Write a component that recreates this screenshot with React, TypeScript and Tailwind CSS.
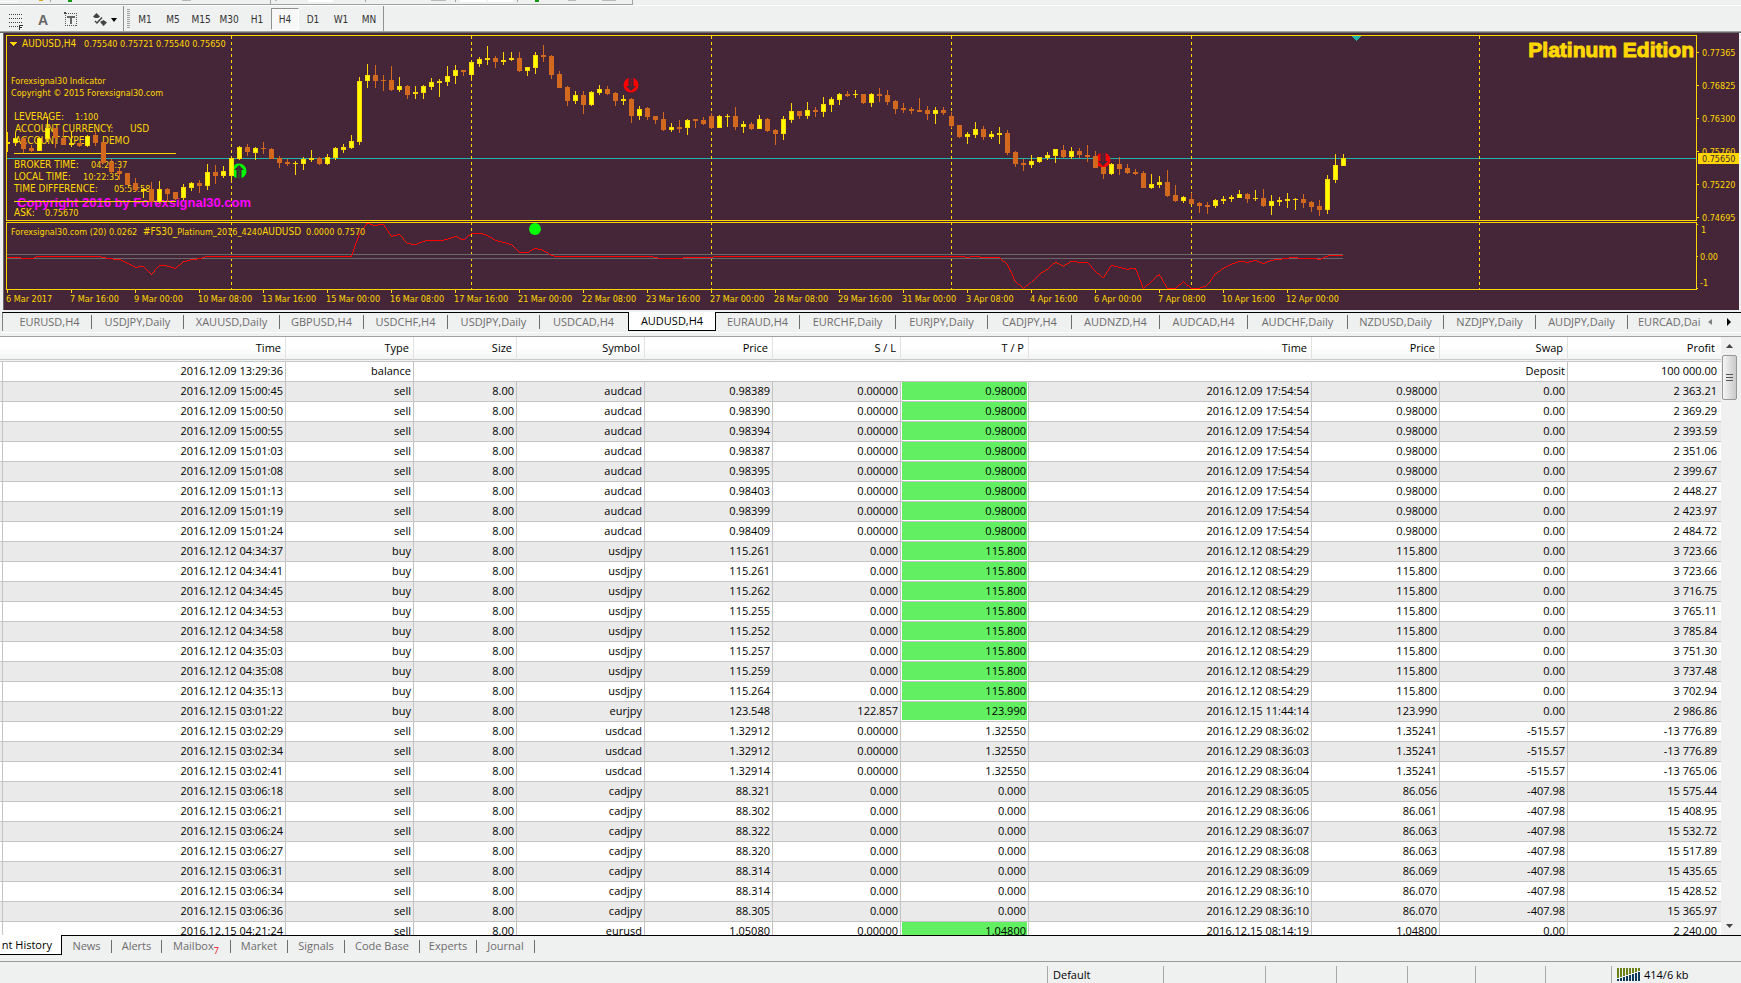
import React from "react";

type Candle = [number, number, number, number, 0 | 1];

// High, body top, body bottom, low (in thirds of a pixel), 1 = rising.
const CANDLES: Candle[] = [
  [396,426,432,456,1],[396,414,429,438,1],[411,414,447,459,0],[435,444,453,456,0],[411,414,453,453,1],[351,384,417,426,1],
  [384,384,414,444,0],[390,414,435,435,0],[396,429,435,441,1],[429,429,438,441,0],[405,408,438,441,1],[393,405,429,438,0],
  [426,426,489,489,0],[477,486,516,522,0],[504,513,522,540,0],[519,519,555,555,0],[534,549,570,573,0],[564,567,573,594,1],
  [546,567,606,606,0],[543,567,606,609,1],[564,567,582,606,0],[576,576,597,600,0],[552,561,594,600,1],[546,549,564,573,1],
  [540,549,558,579,0],[492,516,558,570,1],[495,516,528,552,0],[498,513,528,534,1],[474,474,528,543,1],[438,441,477,480,1],
  [432,441,456,468,0],[441,444,459,480,1],[426,444,447,462,0],[444,447,477,477,0],[468,474,489,504,0],[477,486,492,498,0],
  [483,489,492,525,1],[471,477,492,510,1],[450,474,480,486,1],[471,474,492,495,0],[462,471,492,495,1],[441,444,474,480,1],
  [432,441,450,459,1],[405,423,444,447,1],[231,243,426,435,1],[192,225,243,264,1],[195,225,243,264,0],[225,240,243,273,0],
  [198,240,270,273,0],[231,258,270,276,1],[255,258,285,297,0],[258,276,282,297,1],[255,258,279,297,1],[234,246,261,270,1],
  [237,243,249,291,1],[198,228,246,258,1],[195,210,228,252,1],[210,210,216,228,0],[180,186,225,237,1],[171,177,192,201,1],
  [138,174,180,195,1],[168,174,186,204,0],[156,180,186,195,1],[156,174,180,183,1],[156,174,213,216,0],[201,201,213,228,1],
  [156,165,204,222,1],[135,165,171,186,0],[165,168,225,237,0],[213,222,264,264,0],[258,261,303,318,0],[273,285,303,312,1],
  [273,285,315,342,0],[273,276,315,318,1],[255,267,279,285,1],[258,267,282,285,0],[276,279,303,318,0],[285,297,303,315,1],
  [294,297,348,369,0],[318,327,348,360,1],[321,324,351,360,0],[348,348,360,372,0],[336,357,390,393,0],[369,381,390,396,1],
  [360,381,387,399,0],[357,360,384,405,1],[357,357,363,384,0],[351,360,372,375,0],[339,348,384,387,0],[345,348,384,384,1],
  [342,348,351,381,1],[321,348,381,390,0],[363,372,381,399,1],[366,372,387,390,0],[345,357,387,387,1],[354,357,393,396,0],
  [387,390,402,435,0],[348,357,402,420,1],[309,333,360,369,1],[333,333,348,357,0],[306,330,348,357,1],[321,330,336,351,0],
  [291,312,336,351,1],[291,297,315,336,1],[279,282,300,315,1],[273,282,288,291,0],[270,282,285,294,1],[282,282,309,312,0],
  [279,282,309,321,1],[264,282,288,306,0],[270,285,306,315,0],[300,303,327,342,0],[309,324,330,339,0],[321,327,333,342,0],
  [294,330,336,336,0],[318,330,342,360,0],[321,330,342,372,1],[321,330,339,345,0],[336,348,378,384,0],[375,375,411,414,0],
  [396,402,411,432,1],[366,387,405,414,1],[378,387,411,420,0],[393,402,411,417,1],[381,399,405,432,1],[390,399,459,465,0],
  [453,456,492,501,0],[477,489,495,513,0],[465,483,495,504,1],[471,471,486,489,1],[456,465,474,480,1],[447,447,468,489,1],
  [435,450,471,474,0],[441,453,471,477,1],[444,453,465,474,0],[435,465,471,486,0],[453,468,504,504,0],[501,501,522,537,0],
  [489,492,522,525,1],[471,492,507,525,0],[492,504,519,522,0],[507,516,522,525,0],[513,519,564,564,0],[522,552,564,567,1],
  [528,546,555,564,1],[510,546,588,591,0],[555,585,603,606,0],[588,591,603,609,1],[579,597,612,612,0],[606,609,618,639,0],
  [606,615,621,642,0],[597,600,618,624,1],[588,597,603,612,1],[585,591,597,606,1],[570,582,594,594,1],[579,582,597,609,0],
  [570,594,597,603,1],[567,594,618,621,0],[585,603,618,645,1],[591,600,606,618,1],[579,597,603,624,1],[594,597,600,630,1],
  [582,597,609,624,0],[603,606,621,636,0],[600,618,630,648,0],[525,537,630,642,1],[462,495,540,549,1],[462,474,498,498,1],
];

const OSCILLATOR =
  "22,774 34,772 60,772 62,775 98,775 112,770 298,770 322,775 346,778 360,778 406,802 430,799 454,824 478,796 502,798 526,805 550,786 574,779 598,776 618,770 1054,770 1078,702 1102,669 1126,677 1150,672 1174,709 1198,703 1222,730 1246,734 1270,724 1296,720 1318,723 1342,718 1366,709 1390,720 1414,701 1438,699 1462,706 1486,721 1510,727 1534,734 1558,757 1582,758 1606,745 1630,751 1654,766 1670,770 1954,770 1980,775 2048,775 2052,772 2134,772 2146,770 2890,770 2902,773 2914,770 2938,770 2942,772 2998,773 3022,793 3046,844 3070,865 3094,847 3118,823 3142,808 3166,787 3190,799 3214,784 3238,787 3262,787 3286,814 3310,834 3334,796 3382,808 3406,804 3430,865 3454,845 3478,823 3502,865 3526,865 3550,845 3574,865 3598,865 3622,856 3646,822 3670,805 3694,793 3718,784 3742,787 3766,781 3790,791 3814,781 3862,775 3880,772 3900,775 3948,775 3950,778 3962,778 3976,770 3994,766 4029,766";

const TIME_LABELS = [
  "6 Mar 2017","7 Mar 16:00","9 Mar 00:00","10 Mar 08:00","13 Mar 16:00","15 Mar 00:00","16 Mar 08:00",
  "17 Mar 16:00","21 Mar 00:00","22 Mar 08:00","23 Mar 16:00","27 Mar 00:00","28 Mar 08:00","29 Mar 16:00",
  "31 Mar 00:00","3 Apr 08:00","4 Apr 16:00","6 Apr 00:00","7 Apr 08:00","10 Apr 16:00","12 Apr 00:00",
];

const PRICE_LABELS: [string, number][] = [
  ["0.77365", 52],["0.76825", 85],["0.76300", 118],["0.75760", 151],["0.75220", 184],["0.74695", 217],
];

const WEEK_LINES = [231, 471, 711, 951, 1191, 1479];

const GOLD = "#ffd700";
const PLUM = "#452639";

function Marker({ x, y, color, down }: { x: number; y: number; color: string; down?: boolean }) {
  return (
    <g transform={`translate(${x} ${y})${down ? "" : " scale(1 -1)"}`}>
      <circle r="7.5" fill={color} />
      <path d="M-2.5 -8H2.5V1H5L0 6L-5 1H-2.5Z" fill={PLUM} />
      <path d="M-0.5 -7H0.5V2H-0.5Z" fill={color} opacity="0.35" />
    </g>
  );
}

function PriceChart() {
  return (
    <svg
      viewBox="0 33 1741 277"
      className="block w-full font-['DejaVu_Sans_Condensed','DejaVu_Sans',sans-serif] text-[9px]"
      role="img"
      aria-label="AUDUSD H4 price chart"
    >
      <rect x="4" y="33" width="1735" height="277" fill={PLUM} />
      <g shapeRendering="crispEdges">
        <path d="M3.5 33V310" stroke="#696969" />
        <g fill={GOLD}>
          <g className="text-[10px]">
            <text x="22" y="47">AUDUSD,H4</text>
            <text x="14" y="120">LEVERAGE:</text>
            <text x="15" y="132">ACCOUNT CURRENCY:</text>
            <text x="130" y="132">USD</text>
            <text x="15" y="144">ACCOUNT TYPE:</text>
            <text x="102" y="144">DEMO</text>
            <text x="14" y="168">BROKER TIME:</text>
            <text x="14" y="180">LOCAL TIME:</text>
            <text x="14" y="192">TIME DIFFERENCE:</text>
          </g>
          <g className="text-[9px]">
            <text x="84" y="47">0.75540 0.75721 0.75540 0.75650</text>
            <text x="75" y="120">1:100</text>
            <text x="91" y="168">04:22:37</text>
            <text x="83" y="180">10:22:35</text>
            <text x="114" y="192">05:59:58</text>
            <text x="45" y="216">0.75670</text>
          </g>
          <text x="11" y="84">Forexsignal30 Indicator</text>
          <text x="11" y="96">Copyright © 2015 Forexsignal30.com</text>
        </g>
        <path d="M10 42H17L13.5 46Z" fill={GOLD} />
        <path d="M14 153.5H176" stroke={GOLD} />
        <path d="M7 158.5H1696" stroke="#20b2aa" />
      </g>
      <text x="17" y="207" fill="#ff00ff" className="font-['Liberation_Sans',Arial,sans-serif] text-[13px] font-bold">
        Copyright 2016 by Forexsignal30.com
      </text>
      <text x="14" y="216" fill={GOLD} className="text-[10px]">ASK:</text>
      <Marker x={239} y={171} color="#00ff00" />
      <Marker x={631} y={85} color="#ff0000" down />
      <Marker x={1103} y={160} color="#ff0000" down />
      <g shapeRendering="crispEdges">
        <path d="M14 201.5H176" stroke={GOLD} />
        {WEEK_LINES.map((x) => (
          <path key={x} d={`M${x}.5 36V289`} stroke={GOLD} strokeDasharray="3 3" />
        ))}
        {CANDLES.map(([high, top, bottom, low, rising], i) => {
          const x = 7 + 8 * i;
          const y = Math.round(top / 3);
          const h = Math.max(1, Math.round(bottom / 3) - y);
          const wickTop = Math.round(high / 3);
          const wick = Math.max(1, Math.round(low / 3) - wickTop);
          return (
            <g key={x} fill={rising ? GOLD : "#d2691e"}>
              <rect x={x} y={wickTop} width="1" height={wick} />
              <rect x={x - 2} y={y} width="5" height={h} />
              {rising && h > 2 ? <rect x={x - 1} y={y + 1} width="3" height={h - 2} fill="#ffff00" /> : null}
            </g>
          );
        })}
        <rect x="4" y="36" width="2" height="250" fill={PLUM} />
        <path d="M7 254.5H1343M7 258.5H1343" stroke="#696969" />
        <g transform="scale(0.33333)">
          <polyline points={OSCILLATOR} fill="none" stroke="#ff0000" strokeWidth="3" />
        </g>
        <path d="M6.5 35.5H1696.5V220.5H6.5ZM6.5 222.5H1696.5V289.5H6.5Z" fill="none" stroke={GOLD} />
        {TIME_LABELS.map((label, i) => (
          <path key={label} d={`M${7 + 64 * i}.5 290V293`} stroke={GOLD} />
        ))}
        {PRICE_LABELS.map(([label, y]) => (
          <path key={label} d={`M1697 ${y}.5H1699`} stroke={GOLD} />
        ))}
        <path d="M1697 224.5H1698M1697 256.5H1698M1697 288.5H1698" stroke={GOLD} />
        <path d="M1351 36H1361L1356.5 41Z" fill="#20b2aa" />
      </g>
      <circle cx="535" cy="229" r="6" fill="#00ff00" />
      <g fill={GOLD}>
        <text x="11" y="235">Forexsignal30.com (20) 0.0262</text>
        <text x="143" y="235">
          <tspan className="text-[10px]">#FS30_</tspan>Platinum_2016_4240<tspan className="text-[10px]">AUDUSD</tspan>
        </text>
        <text x="306" y="235">0.0000 0.7570</text>
        {TIME_LABELS.map((label, i) => (
          <text key={label} x={6 + 64 * i} y="302">{label}</text>
        ))}
        {PRICE_LABELS.map(([label, y]) => (
          <text key={label} x="1702" y={y + 4}>{label}</text>
        ))}
        <text x="1701" y="233">1</text>
        <text x="1700" y="260">0.00</text>
        <text x="1700" y="286">-1</text>
        <text
          x="1694"
          y="57"
          textAnchor="end"
          stroke={GOLD}
          strokeWidth="1"
          className="font-['Liberation_Sans',Arial,sans-serif] text-[21px] font-bold"
        >
          Platinum Edition
        </text>
      </g>
      <rect x="1698" y="153" width="41" height="11" fill={GOLD} />
      <text x="1702" y="162" fill={PLUM}>0.75650</text>
    </svg>
  );
}

const TIMEFRAMES = ["M1", "M5", "M15", "M30", "H1", "H4", "D1", "W1", "MN"];

function Toolbar() {
  return (
    <header>
      <div className="h-[5px]">
        <svg viewBox="0 0 640 5" width="640" height="5" className="block" shapeRendering="crispEdges" aria-hidden="true">
          <path d="M0 4.5H632.5V0" fill="none" stroke="#a0a0a0" />
          <path d="M0 1H18V2H0ZM308 0H333V2H308ZM460 0H486V2H460ZM488 0H513V2H488Z" fill="#ffffff" />
          <path d="M50.5 0V2M270.5 0V4M455.5 0V2M517.5 0V2M365.5 0V2" stroke="#a0a0a0" />
          <path d="M68 0H72V2H68ZM535 0H539V2H535Z" fill="#129a12" />
          <path d="M39 0H43V1H39Z" fill="#d9a520" />
          <path d="M182 0H191V1H182ZM568 0H576V1H568ZM602 0H616V1H602ZM431 0H446V1H431ZM275 0H277V1H275Z" fill="#b8b8b8" />
        </svg>
      </div>
      <div className="flex h-[26px] items-center border-t border-white">
        <button aria-label="Fibonacci" className="flex h-6 w-[30px] items-center justify-end pt-1">
          <svg width="24" height="20" viewBox="0 0 24 20" shapeRendering="crispEdges">
            <path d="M3 3.5H17M3 7.5H17M3 11.5H17M3 15.5H12" stroke="#444" strokeDasharray="1 1" />
            <path d="M13.5 19V14.5H17M13.5 16.5H16" fill="none" stroke="#333" />
          </svg>
        </button>
        <button aria-label="Text" className="h-6 w-[26px] pt-px text-center font-['Liberation_Sans',sans-serif] text-[14px] leading-6 font-bold text-[#666]">
          A
        </button>
        <button aria-label="Text label" className="flex h-6 w-[30px] items-center justify-center">
          <svg width="14" height="16" viewBox="0 0 14 16" shapeRendering="crispEdges">
            <rect x="1.5" y="2.5" width="11" height="12" fill="none" stroke="#555" strokeDasharray="1 1" />
            <path d="M3 5H11V7H8V13H6V7H3Z" fill="#666" />
            <path d="M0 1H2V3H0Z" fill="#444" />
          </svg>
        </button>
        <button aria-label="Arrows" className="flex h-6 w-[37px] items-center justify-center gap-1 pt-0.5">
          <svg width="14" height="13" viewBox="0 0 14 13">
            <path d="M0 3.500L3.500 0L7 3.500L5 5H2ZM7 9L10.500 7L14 9.500L10.500 13Z" fill="#444" />
            <path d="M2 8L4 10L9 4.500" fill="none" stroke="#444" strokeWidth="1.500" />
          </svg>
          <svg width="6" height="4" viewBox="0 0 6 4"><path d="M0 0H6L3 4Z" fill="#000" /></svg>
        </button>
        <div className="h-[25px] w-px bg-[#909090]" />
        <div className="ml-[3px] h-5 w-[3px] bg-[repeating-linear-gradient(#a0a0a0_0_1px,transparent_1px_2px)]" />
        <nav className="ml-px flex font-['DejaVu_Sans_Condensed','DejaVu_Sans',sans-serif] text-[10px] text-[#333]">
          {TIMEFRAMES.map((tf) => (
            <button
              key={tf}
              aria-pressed={tf === "H4"}
              className="h-[22px] w-7 border border-transparent pt-0.5 aria-pressed:border-t-[#909090] aria-pressed:border-r-white aria-pressed:border-b-white aria-pressed:border-l-[#909090] aria-pressed:bg-[#f8f8f8]"
            >
              {tf}
            </button>
          ))}
        </nav>
        <div className="h-[25px] w-px bg-[#909090]" />
      </div>
      <div className="h-px bg-[#a0a0a0]" />
      <div className="h-px bg-[#696969]" />
    </header>
  );
}

const CHART_TABS: [string, string][] = [
  ["EURUSD,H4", "w-[90px] pl-[5px]"],["USDJPY,Daily", "w-[92px]"],["XAUUSD,Daily", "w-[96px]"],["GBPUSD,H4", "w-[84px]"],
  ["USDCHF,H4", "w-[84px]"],["USDJPY,Daily", "w-[92px]"],["USDCAD,H4", "w-[88px]"],["AUDUSD,H4", "w-[88px]"],
  ["EURAUD,H4", "w-[84px]"],["EURCHF,Daily", "w-[96px]"],["EURJPY,Daily", "w-[92px]"],["CADJPY,H4", "w-[84px]"],
  ["AUDNZD,H4", "w-[88px]"],["AUDCAD,H4", "w-[88px]"],["AUDCHF,Daily", "w-[100px]"],["NZDUSD,Daily", "w-[96px]"],
  ["NZDJPY,Daily", "w-[92px]"],["AUDJPY,Daily", "w-[92px]"],
];

function ChartTabs() {
  return (
    <nav className="mt-[2px] ml-[2px] flex h-[21px] items-start border-b border-white text-[#6d6d6d]">
      {CHART_TABS.map(([name, width], i) =>
        name === "AUDUSD,H4" ? (
          <button key={i} aria-current="true" className={`${width} h-[19px] shrink-0 border-x border-b border-black bg-white text-black`}>
            <span className="block leading-[18px]">{name}</span>
          </button>
        ) : (
          <button key={i} className={`${width} flex h-[19px] shrink-0 items-center justify-center border-t border-black ${i === 0 ? "border-l border-l-[#808080]" : ""}`}>
            <span className="flex-1 leading-[18px]">{name}</span>
            <span className={CHART_TABS[i + 1]?.[0] === "AUDUSD,H4" ? "w-px" : "h-[14px] w-px bg-[#6d6d6d]"} />
          </button>
        ),
      )}
      <div className="flex h-[19px] min-w-0 flex-1 items-center border-t border-black pl-[10px]">
        <button className="w-[66px] shrink-0 text-left leading-[18px] whitespace-nowrap">EURCAD,Dai</button>
        <button aria-label="Scroll left" className="ml-1">
          <svg width="4" height="6" viewBox="0 0 4 6"><path d="M4 0V6L0 3Z" fill="#808080" /></svg>
        </button>
        <button aria-label="Scroll right" className="ml-[15px]">
          <svg width="4" height="8" viewBox="0 0 4 8"><path d="M0 0V8L4 4Z" fill="#000" /></svg>
        </button>
      </div>
    </nav>
  );
}

type Trade = [string, string, string, string, string, string, string, string, string, string, string];

const audcad = (t: string, price: string, profit: string): Trade => [
  `2016.12.09 ${t}`, "sell", "8.00", "audcad", price, "0.00000", "0.98000", "2016.12.09 17:54:54", "0.98000", "0.00", profit,
];
const usdjpy = (t: string, price: string, profit: string): Trade => [
  `2016.12.12 ${t}`, "buy", "8.00", "usdjpy", price, "0.000", "115.800", "2016.12.12 08:54:29", "115.800", "0.00", profit,
];
const usdcad = (t: string, price: string, closed: string, profit: string): Trade => [
  `2016.12.15 ${t}`, "sell", "8.00", "usdcad", price, "0.00000", "1.32550", `2016.12.29 ${closed}`, "1.35241", "-515.57", profit,
];
const cadjpy = (t: string, price: string, closed: string, close: string, profit: string): Trade => [
  `2016.12.15 ${t}`, "sell", "8.00", "cadjpy", price, "0.000", "0.000", `2016.12.29 ${closed}`, close, "-407.98", profit,
];

const TRADES: Trade[] = [
  audcad("15:00:45", "0.98389", "2 363.21"),
  audcad("15:00:50", "0.98390", "2 369.29"),
  audcad("15:00:55", "0.98394", "2 393.59"),
  audcad("15:01:03", "0.98387", "2 351.06"),
  audcad("15:01:08", "0.98395", "2 399.67"),
  audcad("15:01:13", "0.98403", "2 448.27"),
  audcad("15:01:19", "0.98399", "2 423.97"),
  audcad("15:01:24", "0.98409", "2 484.72"),
  usdjpy("04:34:37", "115.261", "3 723.66"),
  usdjpy("04:34:41", "115.261", "3 723.66"),
  usdjpy("04:34:45", "115.262", "3 716.75"),
  usdjpy("04:34:53", "115.255", "3 765.11"),
  usdjpy("04:34:58", "115.252", "3 785.84"),
  usdjpy("04:35:03", "115.257", "3 751.30"),
  usdjpy("04:35:08", "115.259", "3 737.48"),
  usdjpy("04:35:13", "115.264", "3 702.94"),
  ["2016.12.15 03:01:22", "buy", "8.00", "eurjpy", "123.548", "122.857", "123.990", "2016.12.15 11:44:14", "123.990", "0.00", "2 986.86"],
  usdcad("03:02:29", "1.32912", "08:36:02", "-13 776.89"),
  usdcad("03:02:34", "1.32912", "08:36:03", "-13 776.89"),
  usdcad("03:02:41", "1.32914", "08:36:04", "-13 765.06"),
  cadjpy("03:06:18", "88.321", "08:36:05", "86.056", "15 575.44"),
  cadjpy("03:06:21", "88.302", "08:36:06", "86.061", "15 408.95"),
  cadjpy("03:06:24", "88.322", "08:36:07", "86.063", "15 532.72"),
  cadjpy("03:06:27", "88.320", "08:36:08", "86.063", "15 517.89"),
  cadjpy("03:06:31", "88.314", "08:36:09", "86.069", "15 435.65"),
  cadjpy("03:06:34", "88.314", "08:36:10", "86.070", "15 428.52"),
  cadjpy("03:06:36", "88.305", "08:36:10", "86.070", "15 365.97"),
  ["2016.12.15 04:21:24", "sell", "8.00", "eurusd", "1.05080", "0.00000", "1.04800", "2016.12.15 08:14:19", "1.04800", "0.00", "2 240.00"],
];

const HEADINGS = ["Time", "Type", "Size", "Symbol", "Price", "S / L", "T / P", "Time", "Price", "Swap", "Profit"];

const CELL = "border-r border-b border-[#c4c4c4] p-0 pr-[2px] align-top last:border-r-0 last:pr-1";

function History() {
  return (
    <section className="flex min-h-0 flex-1 border-b border-black">
      <div className="min-w-0 flex-1 overflow-hidden bg-white">
        <table className="w-full table-fixed border-separate border-spacing-0 text-right leading-[18px] whitespace-nowrap text-black">
          <colgroup>
            <col className="w-[3px]" />
            <col className="w-[283px]" />
            <col className="w-[128px]" />
            <col className="w-[103px]" />
            <col className="w-[128px]" />
            <col className="w-[128px]" />
            <col className="w-[128px]" />
            <col className="w-[128px]" />
            <col className="w-[283px]" />
            <col className="w-[128px]" />
            <col className="w-[128px]" />
            <col />
          </colgroup>
          <thead>
            <tr className="h-[25px] bg-linear-to-b from-white from-40% to-[#f0f1f2]">
              <td className="border-b-3 border-double border-[#c8c8c8] p-0" />
              {HEADINGS.map((h, i) => (
                <th key={i} scope="col" className="border-r border-b-3 border-double border-r-[#e2e2e2] border-b-[#c8c8c8] p-0 pr-1 font-normal last:border-r-0 last:pr-[6px]">
                  {h}
                </th>
              ))}
            </tr>
          </thead>
          <tbody>
            <tr className="h-5">
              <td className="border-r border-b border-[#c4c4c4] p-0" />
              <td className={CELL}>2016.12.09 13:29:36</td>
              <td className={CELL}>balance</td>
              <td colSpan={8} className={CELL}>Deposit</td>
              <td className={CELL}>100 000.00</td>
            </tr>
            {TRADES.map((trade, r) => (
              <tr key={r} className="h-5 odd:bg-white even:bg-[#eaeaea]">
                <td className="border-r border-b border-[#c4c4c4] p-0" />
                {trade.map((value, c) =>
                  c === 6 && value !== "0.000" && value !== "1.32550" ? (
                    <td key={c} className="border-r border-b border-[#c4c4c4] bg-white p-0 pr-px pl-px align-top">
                      <div className="h-[18px] bg-[#62f062] pr-px">{value}</div>
                    </td>
                  ) : (
                    <td key={c} className={CELL}>{value}</td>
                  ),
                )}
              </tr>
            ))}
          </tbody>
        </table>
      </div>
      <div className="mr-1 flex w-4 flex-col items-center bg-[#f0f0f0]">
        <button aria-label="Scroll up" className="flex h-[18px] items-center">
          <svg width="7" height="4" viewBox="0 0 7 4"><path d="M0 4H7L3.500 0Z" fill="#444" /></svg>
        </button>
        <div className="flex h-[45px] w-[15px] flex-col items-center justify-center gap-px rounded-xs border border-[#979797] bg-linear-to-r from-[#f5f5f5] to-[#c9c9c9]">
          <span className="h-px w-[7px] bg-[#555]" />
          <span className="mt-px h-px w-[7px] bg-[#555]" />
          <span className="mt-px h-px w-[7px] bg-[#555]" />
        </div>
        <button aria-label="Scroll down" className="mt-auto flex h-[18px] items-center">
          <svg width="7" height="4" viewBox="0 0 7 4"><path d="M0 0H7L3.500 4Z" fill="#444" /></svg>
        </button>
      </div>
    </section>
  );
}

const PANEL_TABS: [string, string][] = [
  ["News", "w-[50px]"],["Alerts", "w-[50px]"],["Mailbox", "w-[69px]"],["Market", "w-[57px]"],
  ["Signals", "w-[57px]"],["Code Base", "w-[75px]"],["Experts", "w-[57px]"],["Journal", "w-[58px]"],
];

function PanelTabs() {
  return (
    <nav className="flex h-[25px] items-start text-[#6d6d6d]">
      <button aria-current="true" className="-mt-px h-5 w-[62px] border-r border-b border-black bg-white pr-[9px] text-right leading-5 whitespace-nowrap text-black">
        nt History
      </button>
      {PANEL_TABS.map(([name, width]) => (
        <button key={name} className={`${width} flex h-5 shrink-0 items-center whitespace-nowrap`}>
          <span className="flex-1 leading-5">
            {name}
            {name === "Mailbox" ? <span className="align-[-4px] text-[9px] leading-none text-[#f00020]">7</span> : null}
          </span>
          <span className="h-[13px] w-px bg-[#6d6d6d]" />
        </button>
      ))}
    </nav>
  );
}

const STATUS_CELLS = ["w-[102px]", "w-[71px]", "w-[71px]", "w-[68px]", "w-[70px]", "w-[66px]"];

function StatusBar() {
  return (
    <footer className="flex h-[22px] items-end justify-end border-t border-[#9a9a9a] text-black">
      <div className="h-[17px] w-[116px] border-l border-[#a8a8a8] pl-[5px] leading-[18px]">Default</div>
      {STATUS_CELLS.map((width, i) => (
        <div key={i} className={`${width} h-[17px] border-l border-[#a8a8a8]`} />
      ))}
      <div className="flex h-[17px] w-[130px] items-center gap-1 border-l border-[#a8a8a8] pl-[5px]">
        <svg width="23" height="13" viewBox="0 0 23 13" shapeRendering="crispEdges" aria-hidden="true">
          {[0, 1, 2, 3, 4, 5, 6, 7].map((i) => (
            <g key={i}>
              <rect x={i * 3} y="0" width="2" height={10 - i} fill="#6b8017" />
              <rect x={i * 3} y={11 - i} width="2" height={2 + i} fill="#0b3a5c" />
            </g>
          ))}
        </svg>
        <span className="leading-[18px]">414/6 kb</span>
      </div>
    </footer>
  );
}

export default function App() {
  return (
    <div className="flex h-screen flex-col overflow-hidden bg-[#eff0f0] font-['Open_Sans','Noto_Sans',sans-serif] text-[11px]">
      <Toolbar />
      <PriceChart />
      <ChartTabs />
      <div className="mt-[3px] h-px bg-[#a0a0a0]" />
      <History />
      <PanelTabs />
      <StatusBar />
    </div>
  );
}
